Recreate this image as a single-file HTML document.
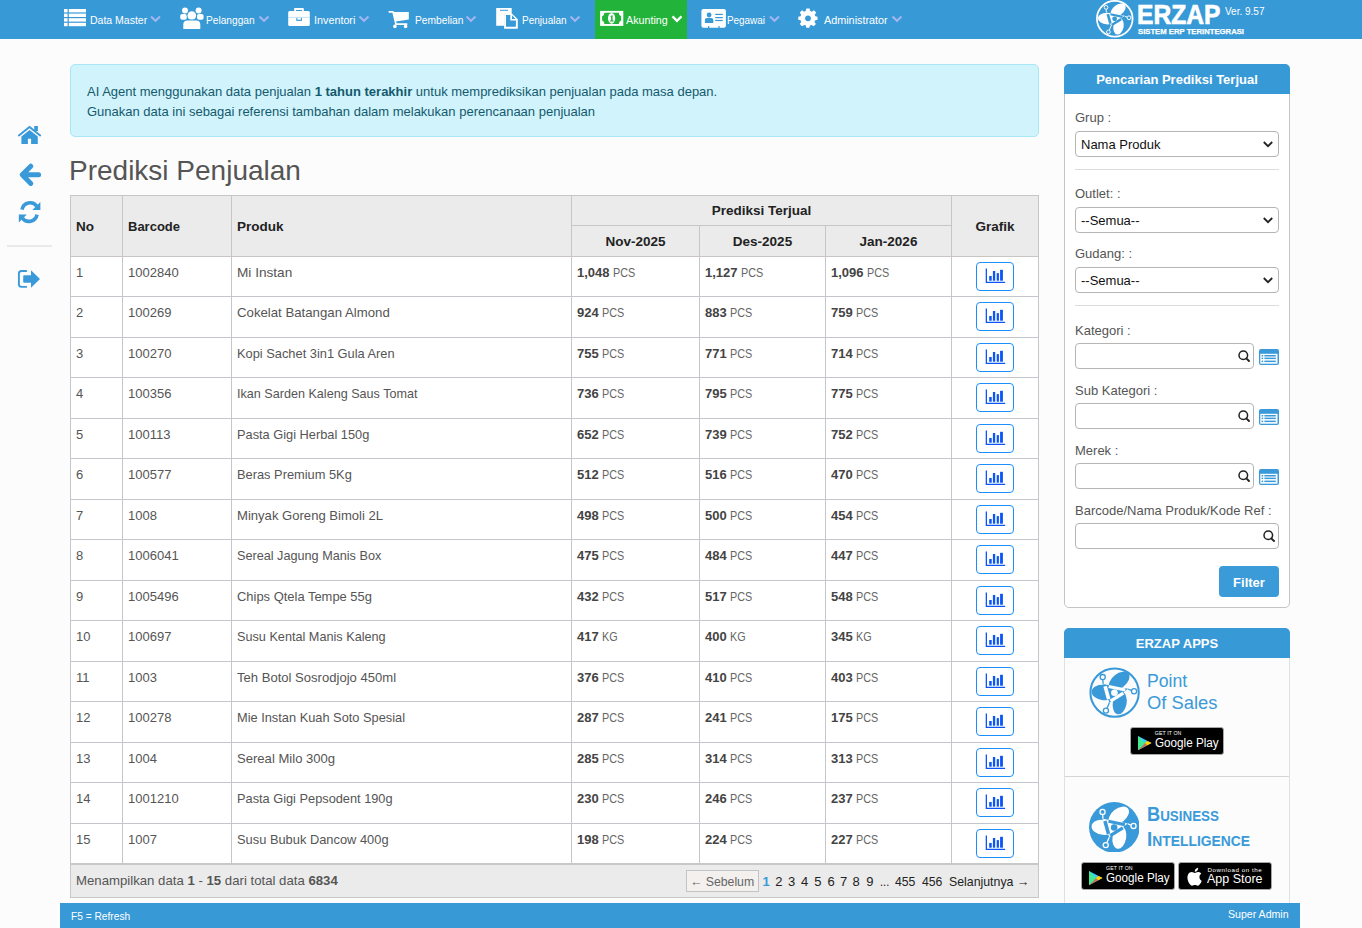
<!DOCTYPE html>
<html><head><meta charset="utf-8">
<style>
*{box-sizing:border-box;margin:0;padding:0}
html,body{width:1362px;height:928px;overflow:hidden;background:#fcfcfc;font-family:"Liberation Sans",sans-serif;color:#555}
.abs{position:absolute}
#hdr{position:absolute;left:0;top:0;width:1362px;height:39px;background:#3899d7}
#akt{position:absolute;left:595px;top:0;width:92px;height:39px;background:#22b33a}
.nt{position:absolute;top:13px;color:#fff;font-size:10.5px;line-height:14px;white-space:nowrap}
.nv svg{position:absolute}
.chev{position:absolute;top:16px}
#side svg{position:absolute}
#alert{position:absolute;left:70px;top:64px;width:969px;height:73px;background:#d1f3fb;border:1px solid #a7e7f6;border-radius:5px;color:#135a6e;font-size:13px;line-height:20px;padding:17px 0 0 16px}
#title{position:absolute;left:69px;top:153px;font-size:28px;color:#555;line-height:36px}
#tbl{position:absolute;left:70px;top:195px;border-collapse:collapse;table-layout:fixed;width:968px;font-size:13px}
#tbl td,#tbl th{border:1px solid #c3c7cb;padding:0 0 0 5px;vertical-align:top;white-space:nowrap;overflow:hidden}
#tbl th{background:#ebebeb;color:#222;font-weight:bold;font-size:13.5px;vertical-align:middle;text-align:left;border-color:#c9c5c5}
#tbl th.c{text-align:center;padding:0}
#tbl td{background:#fff;color:#555;padding-top:8px;padding-left:5px;line-height:15px}
#tbl td b{color:#444}
#tbl td .u{color:#666;font-size:12px;display:inline-block;transform:scaleX(0.9);transform-origin:0 0}
#tbl td .pn{display:inline-block;transform-origin:0 0}
#tbl td.g{text-align:center;padding:5px 0 0 0}
.btn{display:inline-block;width:38px;height:29px;border:1px solid #1c8ffc;border-radius:4px;background:#fff;padding-top:5px;text-align:center;margin-left:0px}
.btn svg{display:inline-block}
#tfoot{position:absolute;left:70px;top:863px;width:969px;height:35px;background:#ebebeb;border:1px solid #c8c8c8;border-top:2px solid #c8c8c8;font-size:13px;color:#555}
#panel{position:absolute;left:1064px;top:64px;width:226px;height:544px;border:1px solid #c4c4c4;border-radius:5px;background:#fff}
#ph{position:absolute;left:-1px;top:-1px;width:226px;height:30px;background:#3899d7;border-radius:5px 5px 0 0;color:#fff;font-weight:bold;font-size:13px;text-align:center;line-height:31px}
.lbl{position:absolute;left:10px;font-size:13px;color:#555;line-height:15px;white-space:nowrap}
.sel{position:absolute;left:10px;width:204px;height:26px;border:1px solid #b5b5b5;border-radius:4px;background:#fff;font-size:13px;color:#111;line-height:25px;padding-left:5px}
.sel svg{position:absolute;right:5px;top:9px}
.hr{position:absolute;left:10px;width:204px;height:1px;background:#ddd}
.inp{position:absolute;left:10px;width:179px;height:26px;border:1px solid #b5b5b5;border-radius:4px;background:#fff}
.inp svg{position:absolute;right:1.5px;top:5.7px}
.lst{position:absolute;left:194px}
#filter{position:absolute;left:154px;top:501px;width:60px;height:31px;background:#3a9bd8;border-radius:4px;color:#fff;font-weight:bold;font-size:13px;text-align:center;line-height:33px}
#apps{position:absolute;left:1064px;top:628px;width:226px;height:280px;border:1px solid #dce1e7;border-radius:5px 5px 0 0;background:#fcfcfc}
#ah{position:absolute;left:-1px;top:-1px;width:226px;height:30px;background:#3899d7;border-radius:5px 5px 0 0;color:#fff;font-weight:bold;font-size:13px;text-align:center;line-height:31px}
#foot{position:absolute;left:60px;top:903px;width:1240px;height:25px;background:#3899d7;color:#fff;font-size:11px;line-height:25px}
</style></head><body>
<div id="hdr"></div>
<div id="akt"></div>
<div class="nv">
<svg class="abs" style="left:0;top:0" width="1362" height="39" viewBox="0 0 1362 39">
<g fill="#fff">
<!-- list -->
<rect x="64" y="9" width="3.6" height="3.4"/><rect x="68.8" y="9" width="17.2" height="3.4"/>
<rect x="64" y="13.6" width="3.6" height="3.4"/><rect x="68.8" y="13.6" width="17.2" height="3.4"/>
<rect x="64" y="18.2" width="3.6" height="3.4"/><rect x="68.8" y="18.2" width="17.2" height="3.4"/>
<rect x="64" y="22.8" width="3.6" height="3.4"/><rect x="68.8" y="22.8" width="17.2" height="3.4"/>
<!-- users -->
<circle cx="185" cy="10.6" r="3"/><circle cx="198.6" cy="10.6" r="3"/>
<rect x="180.2" y="14" width="6.6" height="5.8" rx="2"/><rect x="197" y="14" width="6.6" height="5.8" rx="2"/>
<circle cx="191.8" cy="15.6" r="5" fill="#3899d7"/>
<circle cx="191.8" cy="15.6" r="4.3"/>
<path d="M182.6 29.3V24.5Q182.6 19.6 187.6 19.6H196Q201 19.6 201 24.5V29.3Z" fill="#3899d7"/>
<path d="M183.3 29V24.6Q183.3 20.4 187.6 20.4H196Q200.3 20.4 200.3 24.6V29Z"/>
<!-- briefcase -->
<path d="M294.2 11V8Q294.2 7.9 295 7.9H303Q303.8 7.9 303.8 8.7V11H302V9.9H296V11Z"/>
<rect x="288.2" y="10.9" width="21.6" height="15.1" rx="1.5"/>
<rect x="288.2" y="16.9" width="21.6" height="0.8" fill="#b9d9ef"/>
<rect x="296.3" y="17.9" width="5.6" height="3" fill="#3899d7"/><rect x="297.3" y="17.9" width="3.6" height="1.8" fill="#fff"/>
<!-- cart -->
<path d="M388.6 10.9H393.4L393.9 12H408.8V19.6L396 21.4L396.6 23.3H407.3V24.9H395.3L392.4 12.7H388.6Z"/>
<circle cx="394.9" cy="26.4" r="1.8"/><circle cx="405.6" cy="26.4" r="1.8"/>
<!-- files -->
<path d="M496.2 8H511.7V13H504.1V25.8H496.2Z"/>
<rect x="500" y="9.8" width="8" height="1" fill="#3899d7"/>
<path d="M504.1 13H511.3L517.8 19.3V28.7H504.1ZM506 14.9V26.8H515.9V20.6H510.3V14.9ZM512 15.3V18.9H515.5Z" fill-rule="evenodd"/>
<!-- id card -->
<path d="M703.4 9.1H723.9Q725.9 9.1 725.9 11.1V25.8Q725.9 27.8 723.9 27.8H719.6V26H718.4V27.8H709.2V26H708V27.8H703.4Q701.4 27.8 701.4 25.8V11.1Q701.4 9.1 703.4 9.1Z"/>
<circle cx="709.1" cy="15" r="2.4" fill="#3899d7"/>
<path d="M704.9 22.9V20Q704.9 17.9 707 17.9H711.2Q713.3 17.9 713.3 20V22.9Z" fill="#3899d7"/>
<rect x="715.2" y="13.8" width="7.6" height="1.2" fill="#3899d7"/><rect x="715.2" y="17" width="7.6" height="1.2" fill="#3899d7"/><rect x="715.2" y="19.9" width="7.6" height="1.2" fill="#3899d7"/>
<!-- gear -->
<g transform="translate(808 18.3)">
<path d="M-1.8 -9.3H1.8L2.3 -6.6L4.3 -5.7L6.6 -7.2L9.1 -4.7L7.5 -2.4L8.2 -0.6L10.6 -0.1V3.4L8.1 3.9L7.2 5.8L8.8 8.1L6.3 10.6L4 9L2.1 9.8L1.6 12.3H-1.9L-2.4 9.8L-4.3 9L-6.6 10.6L-9.1 8.1L-7.5 5.8L-8.3 3.9L-10.8 3.4V-0.1L-8.3 -0.6L-7.6 -2.4L-9.1 -4.7L-6.6 -7.2L-4.4 -5.7L-2.4 -6.6Z" transform="translate(0 -1.5) scale(0.9)"/>
<circle cx="0" cy="0" r="2.9" fill="#3899d7"/>
</g>
</g>
<!-- money on green -->
<rect x="600.1" y="10.9" width="23.2" height="15" fill="#fff"/>
<path d="M604.5 12.7H618.8Q619 15.8 621.1 16.3V20.5Q619 21 618.8 24.1H604.5Q604.3 21 602.1 20.5V16.3Q604.3 15.8 604.5 12.7Z" fill="#22b33a"/>
<ellipse cx="611.6" cy="18.3" rx="3.6" ry="5.4" fill="#fff"/>
<path d="M610.3 16.6L611.9 15.2H612.6V20.6H613.7V21.5H609.9V20.6H611.1V16.6L610.6 17.1Z" fill="#22b33a"/>
<!-- chevrons -->
<g fill="none" stroke="#a3b6ef" stroke-width="2">
<path d="M151 16.6L155.5 20.8L160 16.6"/>
<path d="M259.5 16.6L264 20.8L268.5 16.6"/>
<path d="M359.5 16.6L364 20.8L368.5 16.6"/>
<path d="M466.5 16.6L471 20.8L475.5 16.6"/>
<path d="M570.5 16.6L575 20.8L579.5 16.6"/>
<path d="M770 16.6L774.5 20.8L779 16.6"/>
<path d="M892.5 16.6L897 20.8L901.5 16.6"/>
</g>
<path d="M672.5 16.4L677 20.8L681.5 16.4" fill="none" stroke="#fff" stroke-width="2.4"/>
</svg>
<div class="nt" style="left:90px">Data Master</div>
<div class="nt" style="left:206px;transform:scaleX(0.968);transform-origin:0 0">Pelanggan</div>
<div class="nt" style="left:313.5px;transform:scaleX(1.027);transform-origin:0 0">Inventori</div>
<div class="nt" style="left:414.5px;transform:scaleX(0.976);transform-origin:0 0">Pembelian</div>
<div class="nt" style="left:522px;transform:scaleX(0.955);transform-origin:0 0">Penjualan</div>
<div class="nt" style="left:626px;transform:scaleX(1.022);transform-origin:0 0">Akunting</div>
<div class="nt" style="left:727px;transform:scaleX(0.943);transform-origin:0 0">Pegawai</div>
<div class="nt" style="left:824px;transform:scaleX(1.029);transform-origin:0 0">Administrator</div>

</div>
<div id="side">
<svg class="abs" style="left:0;top:110px" width="60" height="190" viewBox="0 110 60 190">
<g fill="#3a9ad9">
<!-- home -->
<path d="M18.9 135.5L29.5 127L40.2 135.5" fill="none" stroke="#3a9ad9" stroke-width="1.9" stroke-linecap="round" stroke-linejoin="miter"/>
<rect x="34.2" y="126" width="3.7" height="5"/>
<path d="M21.4 143.9V136.4L29.6 129.9L37.8 136.4V143.9H31.1V138.7H27.9V143.9Z"/>
<!-- arrow -->
<path d="M30.8 166.2L22.2 174.8L30.8 183.4M22.5 174.8H38.6" fill="none" stroke="#3a9ad9" stroke-width="5" stroke-linecap="round" stroke-linejoin="round"/>
<!-- refresh -->
<path d="M22 209.6A8.2 8.2 0 0 1 36.8 206.3" fill="none" stroke="#3a9ad9" stroke-width="3.6"/>
<path d="M40.4 202.1V210.1H32.4Z"/>
<path d="M37 214.6A8.2 8.2 0 0 1 22.3 218" fill="none" stroke="#3a9ad9" stroke-width="3.6"/>
<path d="M18.8 222.6V214.4H26.8Z"/>
<!-- signout -->
<path d="M26.9 271H21.5Q18.9 271 18.9 273.6V284.3Q18.9 286.9 21.5 286.9H26.9" fill="none" stroke="#3a9ad9" stroke-width="1.9"/>
<path d="M24.2 275.2H31V270.3L40 279L31 287.7V282.7H24.2Q23.2 282.7 23.2 281.7V276.2Q23.2 275.2 24.2 275.2Z"/>
</g>
<rect x="7" y="245.5" width="45" height="1" fill="#d6d6d6"/>
</svg>

</div>
<div id="alert">AI Agent menggunakan data penjualan <b>1 tahun terakhir</b> untuk memprediksikan penjualan pada masa depan.<br>Gunakan data ini sebagai referensi tambahan dalam melakukan perencanaan penjualan</div>
<div id="title">Prediksi Penjualan</div>
<table id="tbl">
<colgroup><col style="width:52px"><col style="width:109px"><col style="width:340px"><col style="width:128px"><col style="width:126px"><col style="width:126px"><col style="width:87px"></colgroup>
<tr style="height:30px"><th rowspan="2">No</th><th rowspan="2" style="font-size:13px">Barcode</th><th rowspan="2">Produk</th><th class="c" colspan="3">Prediksi Terjual</th><th class="c" rowspan="2">Grafik</th></tr>
<tr style="height:31px"><th class="c">Nov-2025</th><th class="c">Des-2025</th><th class="c">Jan-2026</th></tr>
<tr style="height:40px"><td>1</td><td>1002840</td><td><span class="pn" style="transform:scaleX(1.048)">Mi Instan</span></td><td><b>1,048</b> <span class="u">PCS</span></td><td><b>1,127</b> <span class="u">PCS</span></td><td><b>1,096</b> <span class="u">PCS</span></td><td class="g"><span class="btn"><svg width="21" height="15" viewBox="0 -1 21 15" style="margin-left:1px"><g fill="#0a55f5"><path d="M0.7 -0.5H2V12.8H20.1V14H0.7Z"/><rect x="4.2" y="7" width="2.5" height="4.7"/><rect x="7.9" y="2" width="2.3" height="9.7"/><rect x="11.7" y="4.1" width="2.2" height="7.6"/><rect x="15.1" y="0.8" width="2.8" height="10.9"/></g></svg></span></td></tr>
<tr style="height:41px"><td>2</td><td>100269</td><td><span class="pn" style="transform:scaleX(1.016)">Cokelat Batangan Almond</span></td><td><b>924</b> <span class="u">PCS</span></td><td><b>883</b> <span class="u">PCS</span></td><td><b>759</b> <span class="u">PCS</span></td><td class="g"><span class="btn"><svg width="21" height="15" viewBox="0 -1 21 15" style="margin-left:1px"><g fill="#0a55f5"><path d="M0.7 -0.5H2V12.8H20.1V14H0.7Z"/><rect x="4.2" y="7" width="2.5" height="4.7"/><rect x="7.9" y="2" width="2.3" height="9.7"/><rect x="11.7" y="4.1" width="2.2" height="7.6"/><rect x="15.1" y="0.8" width="2.8" height="10.9"/></g></svg></span></td></tr>
<tr style="height:40px"><td>3</td><td>100270</td><td><span class="pn" style="transform:scaleX(0.987)">Kopi Sachet 3in1 Gula Aren</span></td><td><b>755</b> <span class="u">PCS</span></td><td><b>771</b> <span class="u">PCS</span></td><td><b>714</b> <span class="u">PCS</span></td><td class="g"><span class="btn"><svg width="21" height="15" viewBox="0 -1 21 15" style="margin-left:1px"><g fill="#0a55f5"><path d="M0.7 -0.5H2V12.8H20.1V14H0.7Z"/><rect x="4.2" y="7" width="2.5" height="4.7"/><rect x="7.9" y="2" width="2.3" height="9.7"/><rect x="11.7" y="4.1" width="2.2" height="7.6"/><rect x="15.1" y="0.8" width="2.8" height="10.9"/></g></svg></span></td></tr>
<tr style="height:41px"><td>4</td><td>100356</td><td><span class="pn" style="transform:scaleX(0.969)">Ikan Sarden Kaleng Saus Tomat</span></td><td><b>736</b> <span class="u">PCS</span></td><td><b>795</b> <span class="u">PCS</span></td><td><b>775</b> <span class="u">PCS</span></td><td class="g"><span class="btn"><svg width="21" height="15" viewBox="0 -1 21 15" style="margin-left:1px"><g fill="#0a55f5"><path d="M0.7 -0.5H2V12.8H20.1V14H0.7Z"/><rect x="4.2" y="7" width="2.5" height="4.7"/><rect x="7.9" y="2" width="2.3" height="9.7"/><rect x="11.7" y="4.1" width="2.2" height="7.6"/><rect x="15.1" y="0.8" width="2.8" height="10.9"/></g></svg></span></td></tr>
<tr style="height:40px"><td>5</td><td>100113</td><td><span class="pn" style="transform:scaleX(0.984)">Pasta Gigi Herbal 150g</span></td><td><b>652</b> <span class="u">PCS</span></td><td><b>739</b> <span class="u">PCS</span></td><td><b>752</b> <span class="u">PCS</span></td><td class="g"><span class="btn"><svg width="21" height="15" viewBox="0 -1 21 15" style="margin-left:1px"><g fill="#0a55f5"><path d="M0.7 -0.5H2V12.8H20.1V14H0.7Z"/><rect x="4.2" y="7" width="2.5" height="4.7"/><rect x="7.9" y="2" width="2.3" height="9.7"/><rect x="11.7" y="4.1" width="2.2" height="7.6"/><rect x="15.1" y="0.8" width="2.8" height="10.9"/></g></svg></span></td></tr>
<tr style="height:41px"><td>6</td><td>100577</td><td><span class="pn" style="transform:scaleX(0.987)">Beras Premium 5Kg</span></td><td><b>512</b> <span class="u">PCS</span></td><td><b>516</b> <span class="u">PCS</span></td><td><b>470</b> <span class="u">PCS</span></td><td class="g"><span class="btn"><svg width="21" height="15" viewBox="0 -1 21 15" style="margin-left:1px"><g fill="#0a55f5"><path d="M0.7 -0.5H2V12.8H20.1V14H0.7Z"/><rect x="4.2" y="7" width="2.5" height="4.7"/><rect x="7.9" y="2" width="2.3" height="9.7"/><rect x="11.7" y="4.1" width="2.2" height="7.6"/><rect x="15.1" y="0.8" width="2.8" height="10.9"/></g></svg></span></td></tr>
<tr style="height:40px"><td>7</td><td>1008</td><td><span class="pn" style="transform:scaleX(1.006)">Minyak Goreng Bimoli 2L</span></td><td><b>498</b> <span class="u">PCS</span></td><td><b>500</b> <span class="u">PCS</span></td><td><b>454</b> <span class="u">PCS</span></td><td class="g"><span class="btn"><svg width="21" height="15" viewBox="0 -1 21 15" style="margin-left:1px"><g fill="#0a55f5"><path d="M0.7 -0.5H2V12.8H20.1V14H0.7Z"/><rect x="4.2" y="7" width="2.5" height="4.7"/><rect x="7.9" y="2" width="2.3" height="9.7"/><rect x="11.7" y="4.1" width="2.2" height="7.6"/><rect x="15.1" y="0.8" width="2.8" height="10.9"/></g></svg></span></td></tr>
<tr style="height:41px"><td>8</td><td>1006041</td><td><span class="pn" style="transform:scaleX(0.974)">Sereal Jagung Manis Box</span></td><td><b>475</b> <span class="u">PCS</span></td><td><b>484</b> <span class="u">PCS</span></td><td><b>447</b> <span class="u">PCS</span></td><td class="g"><span class="btn"><svg width="21" height="15" viewBox="0 -1 21 15" style="margin-left:1px"><g fill="#0a55f5"><path d="M0.7 -0.5H2V12.8H20.1V14H0.7Z"/><rect x="4.2" y="7" width="2.5" height="4.7"/><rect x="7.9" y="2" width="2.3" height="9.7"/><rect x="11.7" y="4.1" width="2.2" height="7.6"/><rect x="15.1" y="0.8" width="2.8" height="10.9"/></g></svg></span></td></tr>
<tr style="height:40px"><td>9</td><td>1005496</td><td><span class="pn" style="transform:scaleX(0.995)">Chips Qtela Tempe 55g</span></td><td><b>432</b> <span class="u">PCS</span></td><td><b>517</b> <span class="u">PCS</span></td><td><b>548</b> <span class="u">PCS</span></td><td class="g"><span class="btn"><svg width="21" height="15" viewBox="0 -1 21 15" style="margin-left:1px"><g fill="#0a55f5"><path d="M0.7 -0.5H2V12.8H20.1V14H0.7Z"/><rect x="4.2" y="7" width="2.5" height="4.7"/><rect x="7.9" y="2" width="2.3" height="9.7"/><rect x="11.7" y="4.1" width="2.2" height="7.6"/><rect x="15.1" y="0.8" width="2.8" height="10.9"/></g></svg></span></td></tr>
<tr style="height:41px"><td>10</td><td>100697</td><td><span class="pn" style="transform:scaleX(0.975)">Susu Kental Manis Kaleng</span></td><td><b>417</b> <span class="u">KG</span></td><td><b>400</b> <span class="u">KG</span></td><td><b>345</b> <span class="u">KG</span></td><td class="g"><span class="btn"><svg width="21" height="15" viewBox="0 -1 21 15" style="margin-left:1px"><g fill="#0a55f5"><path d="M0.7 -0.5H2V12.8H20.1V14H0.7Z"/><rect x="4.2" y="7" width="2.5" height="4.7"/><rect x="7.9" y="2" width="2.3" height="9.7"/><rect x="11.7" y="4.1" width="2.2" height="7.6"/><rect x="15.1" y="0.8" width="2.8" height="10.9"/></g></svg></span></td></tr>
<tr style="height:40px"><td>11</td><td>1003</td><td><span class="pn" style="transform:scaleX(1.005)">Teh Botol Sosrodjojo 450ml</span></td><td><b>376</b> <span class="u">PCS</span></td><td><b>410</b> <span class="u">PCS</span></td><td><b>403</b> <span class="u">PCS</span></td><td class="g"><span class="btn"><svg width="21" height="15" viewBox="0 -1 21 15" style="margin-left:1px"><g fill="#0a55f5"><path d="M0.7 -0.5H2V12.8H20.1V14H0.7Z"/><rect x="4.2" y="7" width="2.5" height="4.7"/><rect x="7.9" y="2" width="2.3" height="9.7"/><rect x="11.7" y="4.1" width="2.2" height="7.6"/><rect x="15.1" y="0.8" width="2.8" height="10.9"/></g></svg></span></td></tr>
<tr style="height:41px"><td>12</td><td>100278</td><td><span class="pn" style="transform:scaleX(0.985)">Mie Instan Kuah Soto Spesial</span></td><td><b>287</b> <span class="u">PCS</span></td><td><b>241</b> <span class="u">PCS</span></td><td><b>175</b> <span class="u">PCS</span></td><td class="g"><span class="btn"><svg width="21" height="15" viewBox="0 -1 21 15" style="margin-left:1px"><g fill="#0a55f5"><path d="M0.7 -0.5H2V12.8H20.1V14H0.7Z"/><rect x="4.2" y="7" width="2.5" height="4.7"/><rect x="7.9" y="2" width="2.3" height="9.7"/><rect x="11.7" y="4.1" width="2.2" height="7.6"/><rect x="15.1" y="0.8" width="2.8" height="10.9"/></g></svg></span></td></tr>
<tr style="height:40px"><td>13</td><td>1004</td><td><span class="pn" style="transform:scaleX(1.006)">Sereal Milo 300g</span></td><td><b>285</b> <span class="u">PCS</span></td><td><b>314</b> <span class="u">PCS</span></td><td><b>313</b> <span class="u">PCS</span></td><td class="g"><span class="btn"><svg width="21" height="15" viewBox="0 -1 21 15" style="margin-left:1px"><g fill="#0a55f5"><path d="M0.7 -0.5H2V12.8H20.1V14H0.7Z"/><rect x="4.2" y="7" width="2.5" height="4.7"/><rect x="7.9" y="2" width="2.3" height="9.7"/><rect x="11.7" y="4.1" width="2.2" height="7.6"/><rect x="15.1" y="0.8" width="2.8" height="10.9"/></g></svg></span></td></tr>
<tr style="height:41px"><td>14</td><td>1001210</td><td><span class="pn" style="transform:scaleX(0.983)">Pasta Gigi Pepsodent 190g</span></td><td><b>230</b> <span class="u">PCS</span></td><td><b>246</b> <span class="u">PCS</span></td><td><b>237</b> <span class="u">PCS</span></td><td class="g"><span class="btn"><svg width="21" height="15" viewBox="0 -1 21 15" style="margin-left:1px"><g fill="#0a55f5"><path d="M0.7 -0.5H2V12.8H20.1V14H0.7Z"/><rect x="4.2" y="7" width="2.5" height="4.7"/><rect x="7.9" y="2" width="2.3" height="9.7"/><rect x="11.7" y="4.1" width="2.2" height="7.6"/><rect x="15.1" y="0.8" width="2.8" height="10.9"/></g></svg></span></td></tr>
<tr style="height:40px"><td>15</td><td>1007</td><td><span class="pn" style="transform:scaleX(0.989)">Susu Bubuk Dancow 400g</span></td><td><b>198</b> <span class="u">PCS</span></td><td><b>224</b> <span class="u">PCS</span></td><td><b>227</b> <span class="u">PCS</span></td><td class="g"><span class="btn"><svg width="21" height="15" viewBox="0 -1 21 15" style="margin-left:1px"><g fill="#0a55f5"><path d="M0.7 -0.5H2V12.8H20.1V14H0.7Z"/><rect x="4.2" y="7" width="2.5" height="4.7"/><rect x="7.9" y="2" width="2.3" height="9.7"/><rect x="11.7" y="4.1" width="2.2" height="7.6"/><rect x="15.1" y="0.8" width="2.8" height="10.9"/></g></svg></span></td></tr>
</table>
<div id="tfoot">
<div class="abs" style="left:5px;top:8px;line-height:16px;font-size:13.2px">Menampilkan data <b>1</b> - <b>15</b> dari total data <b>6834</b></div>
<div class="abs" style="left:615px;top:5px;width:73px;height:22px;background:#f3f0ee;border:1px solid #c4c4c4"></div>
<div class="abs" style="left:619px;top:8.5px;line-height:16px;font-size:13px;color:#666;white-space:nowrap;transform:scaleX(0.945);transform-origin:0 0">← Sebelum</div>
<div class="abs" style="left:691.5px;top:8.5px;line-height:16px;font-size:13px;color:#3a9ad9;white-space:nowrap;"><b>1</b></div>
<div class="abs" style="left:704.2px;top:8.5px;line-height:16px;font-size:13px;color:#222;white-space:nowrap;">2</div>
<div class="abs" style="left:717px;top:8.5px;line-height:16px;font-size:13px;color:#222;white-space:nowrap;">3</div>
<div class="abs" style="left:730px;top:8.5px;line-height:16px;font-size:13px;color:#222;white-space:nowrap;">4</div>
<div class="abs" style="left:743.2px;top:8.5px;line-height:16px;font-size:13px;color:#222;white-space:nowrap;">5</div>
<div class="abs" style="left:756.4px;top:8.5px;line-height:16px;font-size:13px;color:#222;white-space:nowrap;">6</div>
<div class="abs" style="left:769px;top:8.5px;line-height:16px;font-size:13px;color:#222;white-space:nowrap;">7</div>
<div class="abs" style="left:781.5px;top:8.5px;line-height:16px;font-size:13px;color:#222;white-space:nowrap;">8</div>
<div class="abs" style="left:795.2px;top:8.5px;line-height:16px;font-size:13px;color:#222;white-space:nowrap;">9</div>
<div class="abs" style="left:808.5px;top:8.5px;line-height:16px;font-size:13px;color:#222;white-space:nowrap;transform:scaleX(0.85);transform-origin:0 0">...</div>
<div class="abs" style="left:823.8px;top:8.5px;line-height:16px;font-size:13px;color:#222;white-space:nowrap;transform:scaleX(0.94);transform-origin:0 0">455</div>
<div class="abs" style="left:851px;top:8.5px;line-height:16px;font-size:13px;color:#222;white-space:nowrap;transform:scaleX(0.94);transform-origin:0 0">456</div>
<div class="abs" style="left:878px;top:8.5px;line-height:16px;font-size:13px;color:#222;white-space:nowrap;transform:scaleX(0.948);transform-origin:0 0">Selanjutnya →</div>
</div>
<div id="panel">
<div id="ph">Pencarian Prediksi Terjual</div>
<div class="lbl" style="top:44.8px">Grup :</div>
<div class="sel" style="top:66px">Nama Produk<svg width="10" height="7" viewBox="0 0 10 7"><path d="M0.8 1L5 5.2L9.2 1" fill="none" stroke="#222" stroke-width="1.8"/></svg></div>
<div class="hr" style="top:104px"></div>
<div class="lbl" style="top:121px">Outlet: :</div>
<div class="sel" style="top:142px">--Semua--<svg width="10" height="7" viewBox="0 0 10 7"><path d="M0.8 1L5 5.2L9.2 1" fill="none" stroke="#222" stroke-width="1.8"/></svg></div>
<div class="lbl" style="top:181px">Gudang: :</div>
<div class="sel" style="top:202px">--Semua--<svg width="10" height="7" viewBox="0 0 10 7"><path d="M0.8 1L5 5.2L9.2 1" fill="none" stroke="#222" stroke-width="1.8"/></svg></div>
<div class="hr" style="top:240px"></div>
<div class="lbl" style="top:257.5px">Kategori :</div>
<div class="inp" style="top:278px"><svg width="14" height="14" viewBox="0 0 14 14"><circle cx="5.3" cy="5.3" r="4.3" fill="none" stroke="#222" stroke-width="1.5"/><path d="M8.3 8.3L11 11" stroke="#222" stroke-width="1.9" stroke-linecap="round"/></svg></div>
<svg class="lst" width="20" height="16" viewBox="0 0 20 16" style="top:284px"><rect x="0" y="0" width="20" height="16" rx="2" fill="#3a9ad9"/><rect x="1.3" y="4.8" width="17.2" height="9.9" fill="#fff"/><g fill="#3a9ad9"><rect x="2.6" y="6" width="1.6" height="1.5"/><rect x="5.4" y="6" width="11.4" height="1.5"/><rect x="2.6" y="8.6" width="1.6" height="1.5"/><rect x="5.4" y="8.6" width="11.4" height="1.5"/><rect x="2.6" y="11.6" width="1.6" height="1.5"/><rect x="5.4" y="11.6" width="11.4" height="1.5"/></g></svg>
<div class="lbl" style="top:317.5px">Sub Kategori :</div>
<div class="inp" style="top:338px"><svg width="14" height="14" viewBox="0 0 14 14"><circle cx="5.3" cy="5.3" r="4.3" fill="none" stroke="#222" stroke-width="1.5"/><path d="M8.3 8.3L11 11" stroke="#222" stroke-width="1.9" stroke-linecap="round"/></svg></div>
<svg class="lst" width="20" height="16" viewBox="0 0 20 16" style="top:344px"><rect x="0" y="0" width="20" height="16" rx="2" fill="#3a9ad9"/><rect x="1.3" y="4.8" width="17.2" height="9.9" fill="#fff"/><g fill="#3a9ad9"><rect x="2.6" y="6" width="1.6" height="1.5"/><rect x="5.4" y="6" width="11.4" height="1.5"/><rect x="2.6" y="8.6" width="1.6" height="1.5"/><rect x="5.4" y="8.6" width="11.4" height="1.5"/><rect x="2.6" y="11.6" width="1.6" height="1.5"/><rect x="5.4" y="11.6" width="11.4" height="1.5"/></g></svg>
<div class="lbl" style="top:377.5px">Merek :</div>
<div class="inp" style="top:398px"><svg width="14" height="14" viewBox="0 0 14 14"><circle cx="5.3" cy="5.3" r="4.3" fill="none" stroke="#222" stroke-width="1.5"/><path d="M8.3 8.3L11 11" stroke="#222" stroke-width="1.9" stroke-linecap="round"/></svg></div>
<svg class="lst" width="20" height="16" viewBox="0 0 20 16" style="top:404px"><rect x="0" y="0" width="20" height="16" rx="2" fill="#3a9ad9"/><rect x="1.3" y="4.8" width="17.2" height="9.9" fill="#fff"/><g fill="#3a9ad9"><rect x="2.6" y="6" width="1.6" height="1.5"/><rect x="5.4" y="6" width="11.4" height="1.5"/><rect x="2.6" y="8.6" width="1.6" height="1.5"/><rect x="5.4" y="8.6" width="11.4" height="1.5"/><rect x="2.6" y="11.6" width="1.6" height="1.5"/><rect x="5.4" y="11.6" width="11.4" height="1.5"/></g></svg>
<div class="lbl" style="top:437.5px">Barcode/Nama Produk/Kode Ref :</div>
<div class="inp" style="top:458px;width:204px"><svg width="14" height="14" viewBox="0 0 14 14"><circle cx="5.3" cy="5.3" r="4.3" fill="none" stroke="#222" stroke-width="1.5"/><path d="M8.3 8.3L11 11" stroke="#222" stroke-width="1.9" stroke-linecap="round"/></svg></div>
<div id="filter">Filter</div>

</div>
<div id="apps">
<div id="ah">ERZAP APPS</div>

</div>
<div id="foot"><span style="position:absolute;left:10.5px;top:1px;transform:scaleX(0.926);transform-origin:0 0">F5 = Refresh</span><span style="position:absolute;left:1168px;top:-1.5px;transform:scaleX(0.962);transform-origin:0 0">Super Admin</span></div>
<svg width="0" height="0" style="position:absolute"><defs><symbol id="lg" viewBox="0 0 100 100">
<g style="fill:currentColor">
<ellipse cx="28.5" cy="50" rx="23.5" ry="15" transform="rotate(6 28.5 50)"/>
<ellipse cx="59" cy="27" rx="23" ry="14" transform="rotate(-38 59 27)"/>
<ellipse cx="60" cy="70" rx="22.5" ry="13.5" transform="rotate(100 60 70)"/>
<polygon points="27.4,33.1 76.6,42.3 40,69.7"/>
</g>
<g style="stroke:var(--bg)" stroke-linecap="butt" fill="none">
<path d="M31.5 37.5L38.5 63" stroke-width="7"/>
<path d="M38.5 38L71 45" stroke-width="6"/>
<path d="M67 51L42 66.5" stroke-width="6.5"/>
</g>
<circle cx="49.7" cy="50.3" r="6.5" style="fill:var(--bg)"/>
<g style="stroke:currentColor;fill:var(--bg)" stroke-width="2.6">
<path d="M27.5 33L27 24.5M76.6 43L83 46M40 69.5L35.5 80" fill="none"/>
<circle cx="26.8" cy="19.6" r="5"/>
<circle cx="88" cy="47.4" r="5"/>
<circle cx="33.1" cy="85.2" r="5"/>
</g>
</symbol></defs></svg>
<svg class="abs" style="left:1096.3px;top:0.2px;color:#fff;--bg:#3899d7" width="37.5" height="37.5" viewBox="0 0 100 100"><circle cx="50" cy="50" r="47.6" fill="none" stroke="#fff" stroke-width="4.6"/><use href="#lg" width="100" height="100"/></svg>
<div class="abs" style="left:1137px;top:0.7px;font-size:27.5px;line-height:28px;font-weight:bold;color:#fff;-webkit-text-stroke:0.7px #fff;transform:scaleX(0.894);transform-origin:0 0">ERZAP</div>
<div class="abs" style="left:1224.5px;top:5.3px;font-size:10.5px;line-height:12px;color:#fff;transform:scaleX(0.952);transform-origin:0 0;white-space:nowrap">Ver. 9.57</div>
<div class="abs" style="left:1138px;top:26.6px;font-size:7.5px;line-height:9px;font-weight:bold;color:#fff;-webkit-text-stroke:0.25px #fff;transform:scaleX(1.027);transform-origin:0 0;white-space:nowrap">SISTEM ERP TERINTEGRASI</div>
<svg class="abs" style="left:1088.8px;top:666.9px;color:#3a9ad9;--bg:#fff" width="51.2" height="51.2" viewBox="0 0 100 100"><circle cx="50" cy="50" r="47.2" fill="none" stroke="#3a9ad9" stroke-width="4"/><use href="#lg" width="100" height="100"/></svg>
<div class="abs" style="left:1146.5px;top:670.5px;font-size:18px;line-height:20px;color:#3a9ad9;transform:scaleX(0.98);transform-origin:0 0;white-space:nowrap">Point</div>
<div class="abs" style="left:1146.5px;top:693.3px;font-size:18px;line-height:20px;color:#3a9ad9;transform:scaleX(1.02);transform-origin:0 0;white-space:nowrap">Of Sales</div>
<div class="abs" style="left:1130px;top:727.3px;width:93.6px;height:27.4px;background:#000;border-radius:3px;border:0.6px solid #a6a6a6"></div>
<svg class="abs" style="left:1137.5px;top:736.0px" width="14" height="15" viewBox="0 0 14 15"><path d="M0 0L13.5 7.1L0 14.2Z" fill="#3bccff"/><path d="M0 0L9.2 9.2L0 14.2Z" fill="#48ff48" opacity="0.6"/><path d="M0 14.2L9.2 5L13.5 7.1Z" fill="#ff3a44" opacity="0.7"/><path d="M9.2 5L13.5 7.1L9.2 9.2L6.9 7.1Z" fill="#ffd500"/></svg>
<div class="abs" style="left:1154.8px;top:730.3px;font-size:5.2px;line-height:6px;color:#fff;letter-spacing:0.1px">GET IT ON</div>
<div class="abs" style="left:1154.5px;top:736.3px;font-size:12.3px;line-height:14px;color:#fff;transform:scaleX(0.95);transform-origin:0 0;white-space:nowrap">Google Play</div>
<div class="abs" style="left:1065px;top:776px;width:224px;height:1px;background:#d5d5d5"></div>
<svg class="abs" style="left:1088.8px;top:801.8px;color:#fff;--bg:#3a9ad9" width="50.6" height="50.6" viewBox="0 0 100 100"><circle cx="50" cy="50" r="50" fill="#3a9ad9"/><use href="#lg" width="100" height="100"/></svg>
<div class="abs" style="left:1146.5px;top:803px;font-weight:bold;color:#3a9ad9;transform:scaleX(0.893);transform-origin:0 0;white-space:nowrap;line-height:22px"><span style="font-size:20.4px">B</span><span style="font-size:15px">USINESS</span></div>
<div class="abs" style="left:1147px;top:828.2px;font-weight:bold;color:#3a9ad9;transform:scaleX(0.924);transform-origin:0 0;white-space:nowrap;line-height:22px"><span style="font-size:20.4px">I</span><span style="font-size:15px">NTELLIGENCE</span></div>
<div class="abs" style="left:1081.2px;top:862.3px;width:93.6px;height:27.4px;background:#000;border-radius:3px;border:0.6px solid #a6a6a6"></div>
<svg class="abs" style="left:1088.7px;top:871.0px" width="14" height="15" viewBox="0 0 14 15"><path d="M0 0L13.5 7.1L0 14.2Z" fill="#3bccff"/><path d="M0 0L9.2 9.2L0 14.2Z" fill="#48ff48" opacity="0.6"/><path d="M0 14.2L9.2 5L13.5 7.1Z" fill="#ff3a44" opacity="0.7"/><path d="M9.2 5L13.5 7.1L9.2 9.2L6.9 7.1Z" fill="#ffd500"/></svg>
<div class="abs" style="left:1106.0px;top:865.3px;font-size:5.2px;line-height:6px;color:#fff;letter-spacing:0.1px">GET IT ON</div>
<div class="abs" style="left:1105.7px;top:871.3px;font-size:12.3px;line-height:14px;color:#fff;transform:scaleX(0.95);transform-origin:0 0;white-space:nowrap">Google Play</div>
<div class="abs" style="left:1178.3px;top:862.3px;width:93.6px;height:27.4px;background:#000;border-radius:3px;border:0.6px solid #a6a6a6"></div>
<svg class="abs" style="left:1186.8px;top:866.5px" width="15" height="19" viewBox="0 0 15 19"><path d="M12.4 10.1C12.4 7.9 14.2 6.9 14.3 6.8C13.3 5.3 11.7 5.1 11.2 5.1C9.8 5 8.5 5.9 7.8 5.9C7.1 5.9 6 5.1 4.9 5.1C3.4 5.1 2 6 1.2 7.3C-0.4 10.1 0.8 14.2 2.3 16.4C3.1 17.5 4 18.7 5.1 18.7C6.2 18.6 6.6 18 7.9 18C9.2 18 9.6 18.7 10.7 18.7C11.9 18.7 12.6 17.6 13.4 16.5C14.3 15.2 14.6 14 14.7 13.9C14.6 13.9 12.4 13 12.4 10.1ZM10.3 3.5C10.9 2.8 11.3 1.8 11.2 0.8C10.3 0.9 9.3 1.4 8.7 2.1C8.1 2.8 7.6 3.8 7.8 4.7C8.7 4.8 9.7 4.3 10.3 3.5Z" fill="#fff"/></svg>
<div class="abs" style="left:1207.5px;top:866px;font-size:6.2px;line-height:7px;color:#fff;letter-spacing:0.55px;white-space:nowrap">Download on the</div>
<div class="abs" style="left:1207.2px;top:872px;font-size:13px;line-height:14px;color:#fff;transform:scaleX(0.96);transform-origin:0 0;white-space:nowrap">App Store</div>

</body></html>
